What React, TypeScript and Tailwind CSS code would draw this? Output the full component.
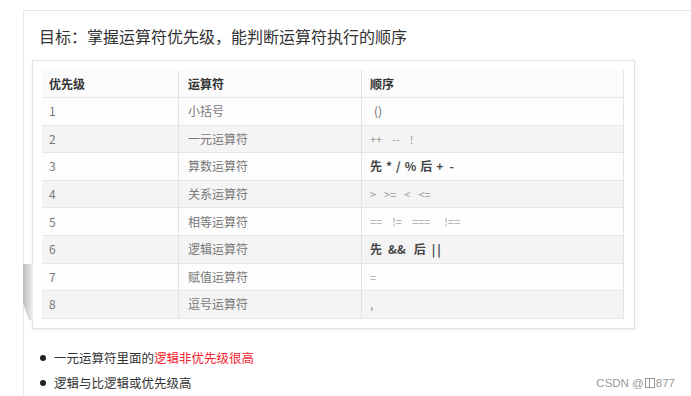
const rows = [
  { level: '1', name: '小括号', order: 'paren' },
  { level: '2', name: '一元运算符', order: 'unary' },
  { level: '3', name: '算数运算符', order: 'arith' },
  { level: '4', name: '关系运算符', order: 'rel' },
  { level: '5', name: '相等运算符', order: 'eq' },
  { level: '6', name: '逻辑运算符', order: 'logic' },
  { level: '7', name: '赋值运算符', order: 'assign' },
  { level: '8', name: '逗号运算符', order: 'comma' },
];

const OrderCell = ({ kind }: { kind: string }) => {
  if (kind === 'paren') return <span className="ml-[4px] text-[#666]">()</span>;
  if (kind === 'unary')
    return (
      <div className="flex items-center gap-[10px] text-[#999] text-[11px]">
        <span>++</span>
        <span>--</span>
        <span>!</span>
      </div>
    );
  if (kind === 'arith')
    return (
      <div className="flex items-center gap-[4px] font-bold text-[#444]">
        <span>先</span>
        <span>*</span>
        <span>/</span>
        <span>%</span>
        <span>后</span>
        <span>+</span>
        <span className="ml-[2px]">-</span>
      </div>
    );
  if (kind === 'rel')
    return (
      <div className="flex items-center gap-[8px] text-[#999] text-[11px]">
        <span>&gt;</span>
        <span>&gt;=</span>
        <span>&lt;</span>
        <span>&lt;=</span>
      </div>
    );
  if (kind === 'eq')
    return (
      <div className="flex items-center gap-[10px] text-[#aaa] text-[11px]">
        <span>==</span>
        <span>!=</span>
        <span>===</span>
        <span className="ml-[4px]">!==</span>
      </div>
    );
  if (kind === 'logic')
    return (
      <div className="flex items-center gap-[6px] font-bold text-[#444]">
        <span>先</span>
        <span>&amp;&amp;</span>
        <span className="ml-[2px]">后</span>
        <span className="tracking-[2px]">||</span>
      </div>
    );
  if (kind === 'assign') return <span className="text-[#aaa] text-[11px]">=</span>;
  return <span className="text-[#888]">,</span>;
};

export default function App() {
  return (
    <div
      className="relative w-[691px] h-[396px] overflow-hidden bg-white"
      style={{ fontFamily: '"Noto Sans CJK SC", "Noto Sans", sans-serif' }}
    >
      <div className="ml-[23px] mt-[10px] h-[386px] border-l border-t border-[#e8e8e8]">
        <h1 className="pl-[15px] pt-[14px] text-[16px] leading-[22px] text-[#333] font-normal">
          目标：掌握运算符优先级，能判断运算符执行的顺序
        </h1>

        <div className="relative ml-[8px] mt-[13px] w-[603px] border border-[#e2e2e2] bg-white p-[9px] pr-[10px] shadow-[0_1px_3px_rgba(0,0,0,0.08)]">
          <div className="absolute left-[-10px] top-[203px] h-[56px] w-[10px] bg-gradient-to-r from-[#bdbdbd] to-[#f0f0f0] [clip-path:polygon(0_0,100%_0,100%_100%,60%_100%,0_70%)]" />
          <div className="border-r border-[#e4e4e4] text-[12px]">
            <div className="grid h-[28px] grid-cols-[136px_183px_1fr] items-center bg-[#fbfbfb] border-b border-[#e6e6e6] font-bold text-[#333]">
              <div className="pl-[7px]">优先级</div>
              <div className="h-full flex items-center border-l border-[#e2e2e2] pl-[9px]">运算符</div>
              <div className="h-full flex items-center border-l border-[#e2e2e2] pl-[8px]">顺序</div>
            </div>
            {rows.map((row, i) => (
              <div
                key={row.level}
                className={`grid h-[27.6px] grid-cols-[136px_183px_1fr] items-center border-b border-[#e6e6e6] text-[#777] ${
                  i % 2 === 1 ? 'bg-[#f4f4f4]' : 'bg-[#fdfdfd]'
                }`}
              >
                <div className="pl-[7px]">{row.level}</div>
                <div className="h-full flex items-center border-l border-[#e2e2e2] pl-[9px]">{row.name}</div>
                <div className="h-full flex items-center border-l border-[#e2e2e2] pl-[8px]">
                  <OrderCell kind={row.order} />
                </div>
              </div>
            ))}
          </div>
        </div>

        <ul className="ml-[16px] mt-[19px] flex flex-col gap-[5px] text-[12.5px] text-[#333]">
          <li className="flex items-center gap-[8px] leading-[20px]">
            <span className="h-[6px] w-[6px] rounded-full bg-[#222]" />
            <span>
              一元运算符里面的<span className="text-[#f5222d]">逻辑非优先级很高</span>
            </span>
          </li>
          <li className="flex items-center gap-[8px] leading-[20px]">
            <span className="h-[6px] w-[6px] rounded-full bg-[#222]" />
            <span>逻辑与比逻辑或优先级高</span>
          </li>
        </ul>
      </div>

      <div
        className="absolute right-[16px] bottom-[4px] flex items-center text-[11.5px] text-[#999]"
        style={{ fontFamily: '"Liberation Sans", Arial, sans-serif' }}
      >
        <span>CSDN @</span>
        <span className="ml-[1px] inline-block h-[10px] w-[5px] border border-[#999]" />
        <span className="inline-block h-[10px] w-[5px] border border-[#999] border-l-0" />
        <span className="ml-[1px]">877</span>
      </div>
    </div>
  );
}
